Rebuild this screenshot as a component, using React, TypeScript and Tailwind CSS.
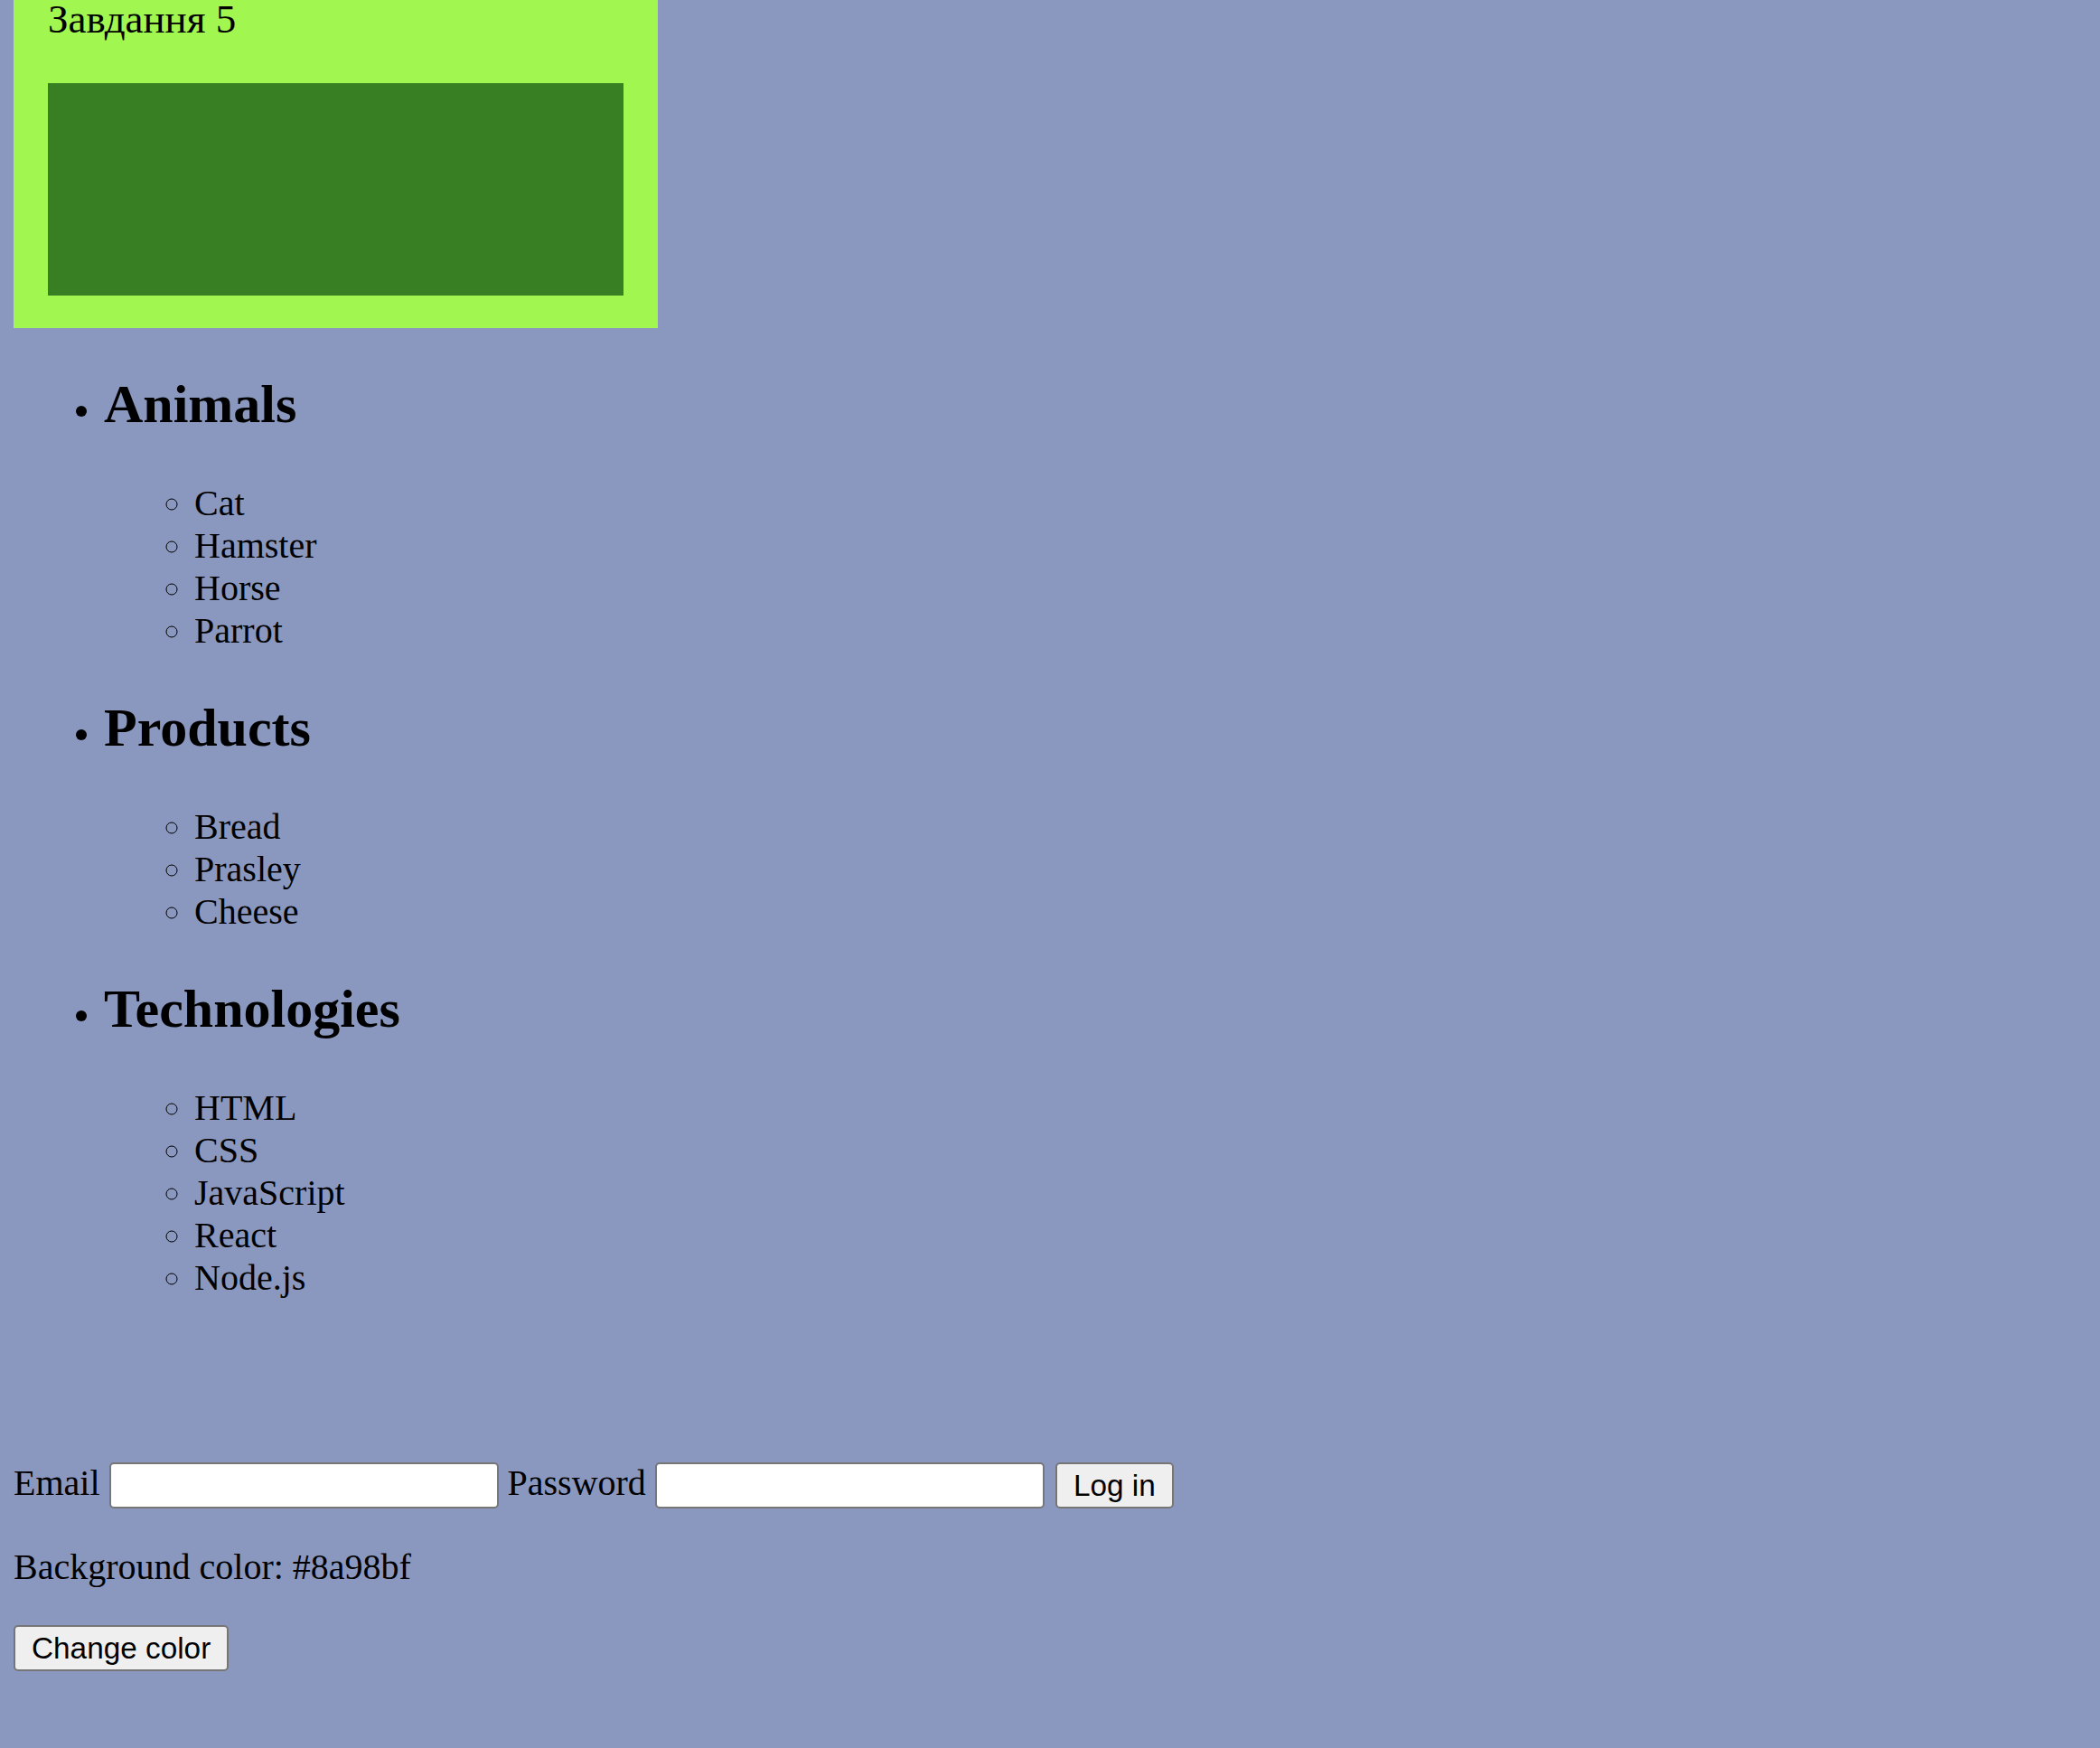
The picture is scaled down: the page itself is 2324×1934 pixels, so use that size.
import React from "react";

const groups: { title: string; items: string[] }[] = [
  { title: "Animals", items: ["Cat", "Hamster", "Horse", "Parrot"] },
  { title: "Products", items: ["Bread", "Prasley", "Cheese"] },
  { title: "Technologies", items: ["HTML", "CSS", "JavaScript", "React", "Node.js"] },
];

export default function App() {
  return (
    <div className="min-h-screen bg-[#8a98bf] pl-[15px] pb-[80px] text-black font-['Liberation_Serif',serif] text-[40px] leading-[47px]">
      <div className="w-[713px] bg-[#a1f64f] px-[38px] pb-[36px]">
        <div className="text-[45px] leading-[42px]">Завдання 5</div>
        <div className="mt-[50px] h-[235px] w-[637px] bg-[#387e22]" />
      </div>

      <ul className="list-disc pl-[100px]">
        {groups.map((g) => (
          <li key={g.title}>
            <h2 className="mt-[50px] mb-[51px] text-[60px] leading-[69px] font-bold">{g.title}</h2>
            <ul className="list-[circle] pl-[100px]">
              {g.items.map((it) => (
                <li key={it}>{it}</li>
              ))}
            </ul>
          </li>
        ))}
      </ul>

      <div className="mt-[181px] flex items-start gap-[10px]">
        <label className="leading-[46px]">Email</label>
        <input
          type="text"
          className="h-[51px] w-[431px] rounded-[5px] border-2 border-[#767676] bg-white"
        />
        <label className="leading-[46px]">Password</label>
        <input
          type="password"
          className="h-[51px] w-[431px] rounded-[5px] border-2 border-[#767676] bg-white"
        />
        <button className="ml-[2px] h-[51px] rounded-[5px] border-2 border-[#767676] bg-[#efefef] px-[18px] font-['Liberation_Sans',Arial,sans-serif] text-[33.33px] leading-[38px]">
          Log in
        </button>
      </div>

      <p className="mt-[42px] leading-[46px]">Background color: #8a98bf</p>

      <button className="mt-[41px] h-[51px] rounded-[5px] border-2 border-[#767676] bg-[#efefef] px-[18px] font-['Liberation_Sans',Arial,sans-serif] text-[33.33px] leading-[38px]">
        Change color
      </button>
    </div>
  );
}
